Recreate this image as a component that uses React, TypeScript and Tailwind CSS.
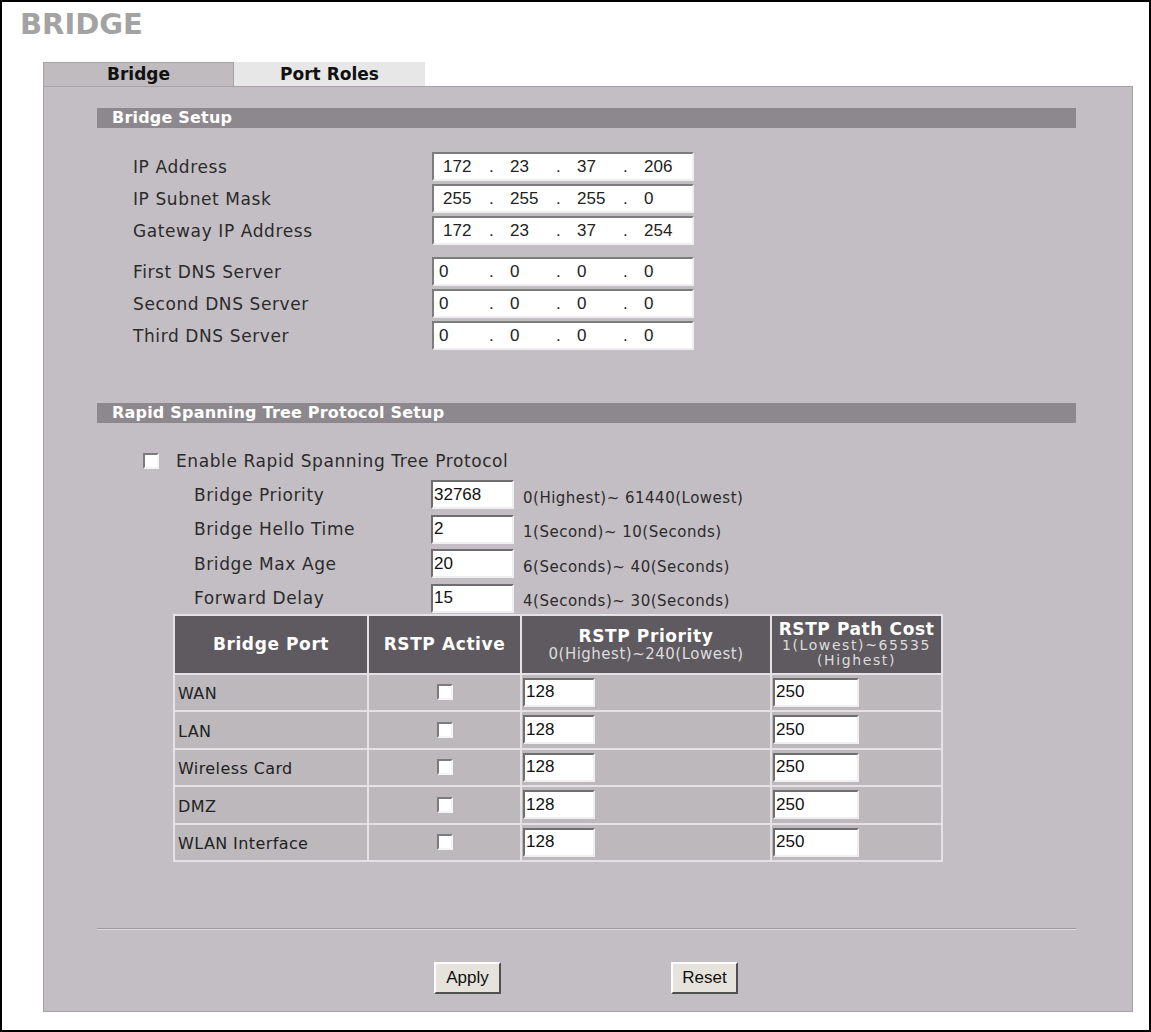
import React from 'react'

const sans = "font-['DejaVu_Sans',Verdana,sans-serif]"
const arial = "font-['Liberation_Sans',Arial,sans-serif]"

const ipRows = [
    { label: 'IP Address', parts: ['172', '23', '37', '206'] },
    { label: 'IP Subnet Mask', parts: ['255', '255', '255', '0'] },
    { label: 'Gateway IP Address', parts: ['172', '23', '37', '254'] },
]

const dnsRows = [
    { label: 'First DNS Server', parts: ['0', '0', '0', '0'] },
    { label: 'Second DNS Server', parts: ['0', '0', '0', '0'] },
    { label: 'Third DNS Server', parts: ['0', '0', '0', '0'] },
]

const rstpRows = [
    { label: 'Bridge Priority', value: '32768', hint: '0(Highest)~ 61440(Lowest)' },
    { label: 'Bridge Hello Time', value: '2', hint: '1(Second)~ 10(Seconds)' },
    { label: 'Bridge Max Age', value: '20', hint: '6(Seconds)~ 40(Seconds)' },
    { label: 'Forward Delay', value: '15', hint: '4(Seconds)~ 30(Seconds)' },
]

const ports = ['WAN', 'LAN', 'Wireless Card', 'DMZ', 'WLAN Interface']

const SectionBar = ({ title }: { title: string }) => (
    <div className={`h-[20px] bg-[#8d888d] pl-[15px] text-[16px] font-bold leading-[20px] tracking-[0.2px] text-white ${sans}`}>{title}</div>
)

const IpBox = ({ parts, pad, first }: { parts: string[], pad: string, first: string }) => (
    <div className={`flex h-[29px] w-[262px] items-center border-2 border-t-[#7c7c7c] border-l-[#7c7c7c] border-r-[#efefef] border-b-[#efefef] bg-white text-[17px] tracking-normal text-[#222] ${arial} ${pad}`}>
        {parts.map((p, i) => (
            <React.Fragment key={i}>
                <span className={i === 0 ? first : 'w-[46px]'}>{p}</span>
                {i < 3 && <span className="w-[21px]">.</span>}
            </React.Fragment>
        ))}
    </div>
)

const TextBox = ({ value, width }: { value: string, width: string }) => (
    <div className={`flex h-[29px] items-center border-2 border-t-[#6e6e6e] border-l-[#6e6e6e] border-r-[#efefef] border-b-[#efefef] bg-white pl-[1px] text-[17px] tracking-normal text-[#111] ${arial} ${width}`}>{value}</div>
)

const CheckBox = () => (
    <div className="h-[16px] w-[16px] border-2 border-t-[#7c7c7c] border-l-[#7c7c7c] border-r-[#f4f4f4] border-b-[#f4f4f4] bg-white" />
)

const Button = ({ label }: { label: string }) => (
    <button className={`h-[32px] w-[67px] border-2 border-t-white border-l-white border-r-[#505050] border-b-[#505050] bg-[#e6e3dc] text-[17px] text-[#111] ${arial}`}>{label}</button>
)

export default function App() {
    return (
        <div className={`h-[1032px] w-[1151px] border-2 border-black bg-white ${sans}`}>
            <h1 className="pl-[18px] pt-[5px] text-[29px] font-bold leading-[34px] text-[#a3a3a3]">BRIDGE</h1>

            <div className="ml-[41px] mt-[21px] w-[1090px]">
                {/* tabs */}
                <div className="flex h-[24px] text-[17px] font-bold text-[#111]">
                    <div className="w-[191px] border border-b-0 border-[#a5a1a5] bg-[#bfbbbf] text-center leading-[22px]">Bridge</div>
                    <div className="w-[191px] bg-[#e7e7e7] text-center leading-[24px]">Port Roles</div>
                </div>

                {/* panel */}
                <div className="h-[926px] border border-[#a5a1a5] bg-[#c3bec3] pl-[53px] pr-[56px] pt-[21px]">
                    <SectionBar title="Bridge Setup" />

                    <div className="mt-[24px] flex flex-col gap-[3px] pl-[36px] text-[17px] leading-[20px] tracking-[0.6px] text-[#2b2b2b]">
                        {ipRows.map(r => (
                            <div key={r.label} className="flex items-center">
                                <span className="w-[299px]">{r.label}</span>
                                <IpBox parts={r.parts} pad="pl-[9px]" first="w-[46px]" />
                            </div>
                        ))}
                    </div>

                    <div className="mt-[12px] flex flex-col gap-[3px] pl-[36px] text-[17px] leading-[20px] tracking-[0.6px] text-[#2b2b2b]">
                        {dnsRows.map(r => (
                            <div key={r.label} className="flex items-center">
                                <span className="w-[299px]">{r.label}</span>
                                <IpBox parts={r.parts} pad="pl-[5px]" first="w-[50px]" />
                            </div>
                        ))}
                    </div>

                    <div className="mt-[53px]">
                        <SectionBar title="Rapid Spanning Tree Protocol Setup" />
                    </div>

                    <div className="mt-[28px] flex items-center gap-[17px] pl-[46px] text-[17px] leading-[20px] tracking-[0.6px] text-[#2b2b2b]">
                        <CheckBox />
                        <span>Enable Rapid Spanning Tree Protocol</span>
                    </div>

                    <div className="mt-[9px] flex flex-col gap-[5.5px] pl-[97px] text-[17px] leading-[20px] tracking-[0.6px] text-[#2b2b2b]">
                        {rstpRows.map(r => (
                            <div key={r.label} className="flex items-center">
                                <span className="w-[237px]">{r.label}</span>
                                <TextBox value={r.value} width="w-[83px]" />
                                <span className="ml-[9px] mt-[6px] text-[15px] tracking-[0.5px]">{r.hint}</span>
                            </div>
                        ))}
                    </div>

                    {/* port table */}
                    <table className="ml-[76px] mt-[1px] w-[770px] border-collapse border-2 border-[#e4e2e4] text-[16px] leading-[20px] tracking-[0.4px]">
                        <thead>
                            <tr className="h-[59px] bg-[#5f5a5f] text-white">
                                <th className="w-[194px] border-2 border-[#e4e2e4] text-[17px] font-bold tracking-[0.6px]">Bridge Port</th>
                                <th className="w-[153px] border-2 border-[#e4e2e4] text-[17px] font-bold tracking-[0.6px]">RSTP Active</th>
                                <th className="w-[250px] border-2 border-[#e4e2e4] font-bold">
                                    <div className="text-[17px] leading-[19px] tracking-[0.6px]">RSTP Priority</div>
                                    <div className="text-[15px] font-normal leading-[16px] tracking-[0.5px] text-[#dcdcdc]">0(Highest)~240(Lowest)</div>
                                </th>
                                <th className="border-2 border-[#e4e2e4] font-bold">
                                    <div className="text-[17px] leading-[18px] tracking-[0.6px]">RSTP Path Cost</div>
                                    <div className="text-[14px] font-normal leading-[15px] tracking-[1.6px] text-[#dcdcdc]">1(Lowest)~65535</div>
                                    <div className="text-[14px] font-normal leading-[15px] tracking-[1.6px] text-[#dcdcdc]">(Highest)</div>
                                </th>
                            </tr>
                        </thead>
                        <tbody>
                            {ports.map(p => (
                                <tr key={p} className="h-[37.5px] bg-[#bcb8bc] text-[#222]">
                                    <td className="whitespace-nowrap border-2 border-[#e4e2e4] pl-[3px] pt-[4px]">{p}</td>
                                    <td className="border-2 border-[#e4e2e4]"><div className="flex justify-center"><CheckBox /></div></td>
                                    <td className="border-2 border-[#e4e2e4] pl-[1px]"><TextBox value="128" width="w-[72px]" /></td>
                                    <td className="border-2 border-[#e4e2e4] pl-[1px]"><TextBox value="250" width="w-[86px]" /></td>
                                </tr>
                            ))}
                        </tbody>
                    </table>

                    <div className="mt-[66px] border-t border-b border-t-[#9c989c] border-b-[#dedade]" />

                    <div className="mt-[32px] flex gap-[170px] pl-[337px]">
                        <Button label="Apply" />
                        <Button label="Reset" />
                    </div>
                </div>
            </div>
        </div>
    )
}
